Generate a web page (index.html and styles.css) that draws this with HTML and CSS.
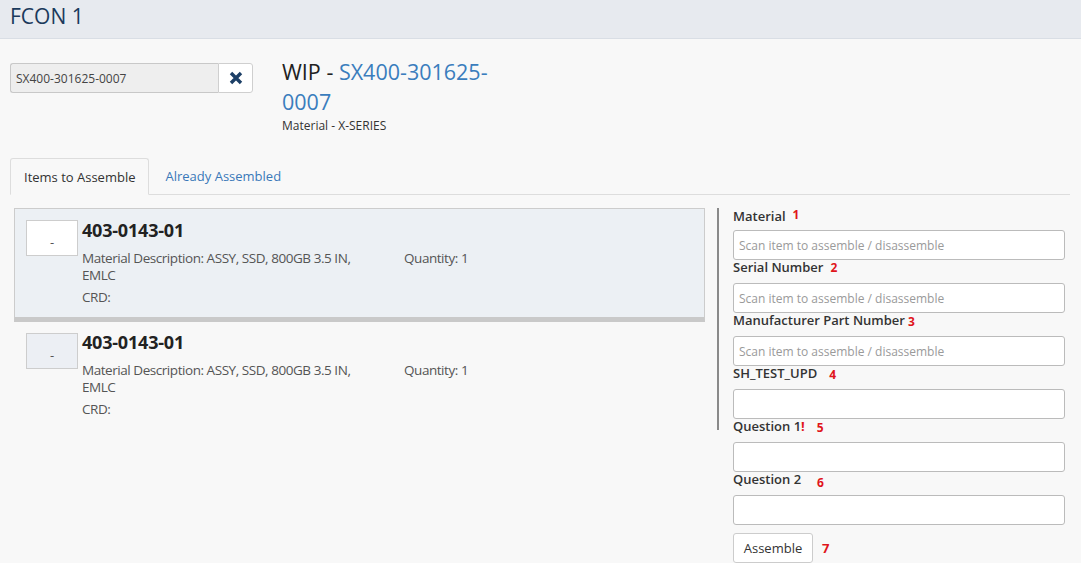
FILE: index.html
```html
<!DOCTYPE html>
<html>
<head>
<meta charset="utf-8">
<link rel="stylesheet" href="styles.css">
</head>
<body>
<header class="topbar"><h1 class="title">FCON 1</h1></header>
<main class="page">
  <section class="top">
    <div class="search">
      <input class="search-input" type="text" value="SX400-301625-0007">
      <button class="clear-btn" type="button" aria-label="Clear">
        <svg width="16" height="16" viewBox="0 0 16 16"><path d="M3 3 L13 13 M13 3 L3 13" stroke="#1c3f66" stroke-width="3.4" stroke-linecap="butt"/></svg>
      </button>
    </div>
    <div class="wip">
      <div class="wip-title"><span>WIP - </span><a class="wip-link"><span>SX400-301625-</span><span>0007</span></a></div>
      <div class="wip-sub">Material - X-SERIES</div>
    </div>
  </section>

  <nav class="tabs">
    <div class="tab active">Items to Assemble</div>
    <div class="tab">Already Assembled</div>
  </nav>

  <section class="content">
    <div class="items">
      <div class="item selected">
        <div class="thumb">-</div>
        <div class="info">
          <div class="pn">403-0143-01</div>
          <div class="row">
            <div class="desc">Material Description: ASSY, SSD, 800GB 3.5 IN, EMLC</div>
            <div class="qty">Quantity: 1</div>
          </div>
          <div class="crd">CRD:</div>
        </div>
      </div>
      <div class="item plain">
        <div class="thumb">-</div>
        <div class="info">
          <div class="pn">403-0143-01</div>
          <div class="row">
            <div class="desc">Material Description: ASSY, SSD, 800GB 3.5 IN, EMLC</div>
            <div class="qty">Quantity: 1</div>
          </div>
          <div class="crd">CRD:</div>
        </div>
      </div>
    </div>
    <div class="divider"></div>
    <form class="form">
      <div class="field"><label class="lbl">Material<span class="num up">1</span></label><input class="inp" placeholder="Scan item to assemble / disassemble"></div>
      <div class="field"><label class="lbl">Serial Number<span class="num">2</span></label><input class="inp" placeholder="Scan item to assemble / disassemble"></div>
      <div class="field"><label class="lbl">Manufacturer Part Number<span class="num tight">3</span></label><input class="inp" placeholder="Scan item to assemble / disassemble"></div>
      <div class="field"><label class="lbl">SH_TEST_UPD<span class="num wide">4</span></label><input class="inp"></div>
      <div class="field"><label class="lbl">Question 1<span class="bang">!</span><span class="num wide">5</span></label><input class="inp"></div>
      <div class="field"><label class="lbl">Question 2<span class="num wide2">6</span></label><input class="inp"></div>
      <div class="actions"><button class="btn" type="button">Assemble</button><span class="num big">7</span></div>
    </form>
  </section>
</main>
</body>
</html>
```

FILE: styles.css
```css
* { box-sizing: border-box; }
html, body { margin: 0; padding: 0; }
body {
  background: #f8f8f8;
  font-family: "Open Sans", "Liberation Sans", sans-serif;
  color: #333;
  font-size: 13px;
  overflow: hidden;
  height: 563px;
}
.topbar {
  height: 39px;
  background: #e7eaef;
  border-bottom: 1px solid #d9dee5;
  padding: 0 10px;
}
.title {
  margin: 0;
  font-weight: 400;
  font-size: 21px;
  line-height: 32px;
  color: #1b3a5c;
}
.page { padding: 0 10px; }
.top {
  display: flex;
  align-items: flex-start;
  padding-top: 24px;
  height: 119px;
}
.search { display: flex; width: 243px; height: 30px; }
.search-input {
  flex: 1;
  min-width: 0;
  height: 30px;
  border: 1px solid #c8c8c8;
  border-right: none;
  border-radius: 3px 0 0 3px;
  background: #eeeeee;
  font-family: inherit;
  font-size: 12px;
  color: #444;
  padding: 0 5px;
  outline: none;
}
.clear-btn {
  width: 35px;
  height: 30px;
  border: 1px solid #cfcfcf;
  border-radius: 0 3px 3px 0;
  background: #fff;
  display: flex;
  align-items: center;
  justify-content: center;
  padding: 0;
}
.wip { margin-left: 29px; width: 220px; margin-top: -6px; }
.wip-title {
  font-size: 21.5px;
  line-height: 30px;
  color: #222;
}
.wip-link { color: #3a7dbd; }
.wip-sub { font-size: 12px; line-height: 17px; color: #333; }

.tabs {
  display: flex;
  height: 37px;
  border-bottom: 1px solid #dddddd;
  margin-right: 1px;
}
.tab {
  padding: 0 13px;
  line-height: 36px;
  font-size: 13px;
  color: #3a78b8;
  margin-right: 3px;
}
.tab.active {
  color: #333;
  background: #f8f8f8;
  border: 1px solid #dddddd;
  border-bottom-color: #f8f8f8;
  border-radius: 3px 3px 0 0;
  height: 37px;
}

.content { display: flex; padding-top: 13px; }
.items { width: 691px; margin-left: 4px; }
.item {
  display: flex;
  padding: 10px 11px 0 11px;
}
.item.selected {
  height: 114px;
  background: #ecf0f4;
  border: 1px solid #cccccc;
  border-bottom: 5px solid #c9c9c9;
}
.item.plain { height: 110px; padding: 9px 12px 0 12px; }
.thumb {
  width: 52px;
  height: 36px;
  margin-top: 1px;
  background: #ffffff;
  border: 1px solid #cdcdcd;
  flex: none;
  text-align: center;
  font-size: 13px;
  line-height: 42px;
  color: #555;
}
.item.plain .thumb { background: #eceff4; margin-top: 2px; }
.info {
  margin-left: 4px;
  flex: 1;
}
.pn {
  font-weight: 700;
  font-size: 18px;
  line-height: 22px;
  color: #222;
  letter-spacing: -0.2px;
}
.row { display: flex; margin-top: 9px; }
.desc, .qty, .crd {
  font-size: 13.5px;
  line-height: 17px;
  color: #555;
  letter-spacing: -0.45px;
}
.desc { width: 300px; }
.qty { margin-left: 22px; }
.crd { margin-top: 5px; }

.divider {
  width: 2px;
  height: 222px;
  background: #8a8a8a;
  margin-left: 12px;
  flex: none;
}
.form {
  margin-left: 14px;
  width: 332px;
  margin-top: -1px;
}
.field { display: flex; flex-direction: column; }
.lbl {
  font-size: 13px;
  font-weight: 600;
  line-height: 15px;
  height: 23px;
  color: #333;
}
.num {
  color: #e0151b;
  font-weight: 700;
  font-size: 12px;
  margin-left: 7px;
  vertical-align: 0;
}
.num.up { vertical-align: 2px; }
.num.tight { margin-left: 3px; vertical-align: -1px; }
.num.wide { margin-left: 12px; vertical-align: -1px; }
.num.wide2 { margin-left: 16px; vertical-align: -3px; }
.bang { color: #e0151b; font-weight: 700; font-size: 13px; }
.inp {
  height: 30px;
  border: 1px solid #bbbbbb;
  border-radius: 3px;
  background: #fff;
  font-family: inherit;
  font-size: 12px;
  padding: 0 5px;
  outline: none;
}
.inp::placeholder { color: #9a9a9a; }
.actions { display: flex; align-items: center; margin-top: 8px; }
.btn {
  width: 80px;
  height: 30px;
  border: 1px solid #cccccc;
  border-radius: 3px;
  background: #fff;
  font-family: inherit;
  font-size: 13px;
  color: #333;
}
.num.big { font-size: 13px; margin-left: 9px; }
```
